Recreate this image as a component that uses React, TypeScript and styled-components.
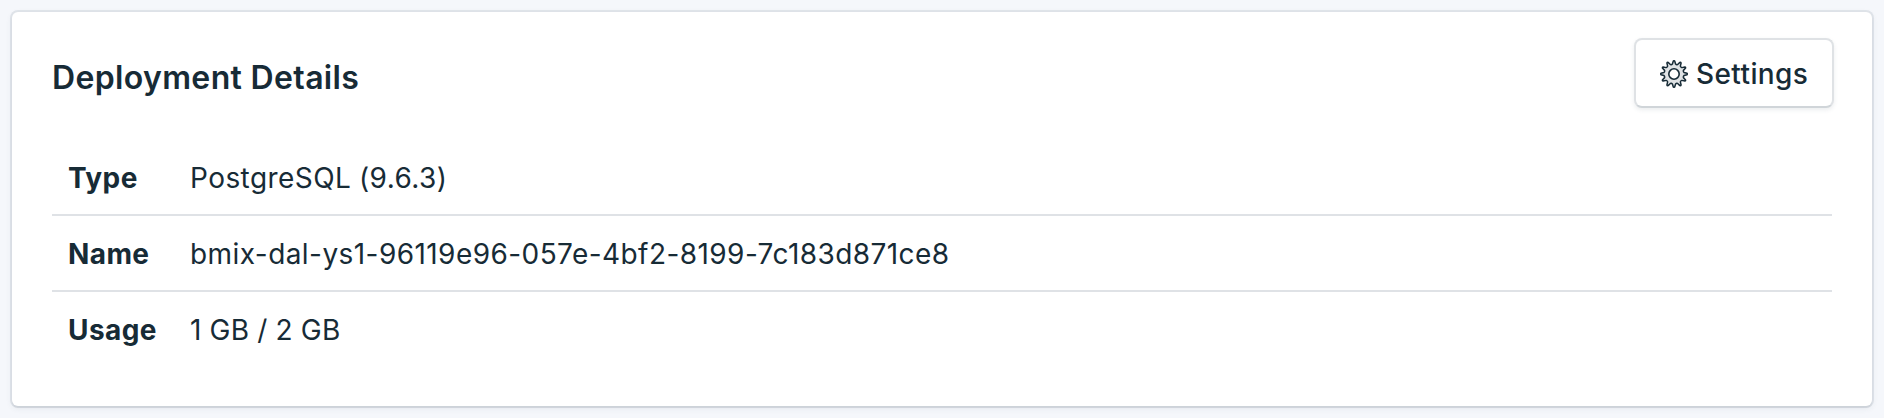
import React from "react";
import styled, { createGlobalStyle } from "styled-components";

const GlobalStyle = createGlobalStyle`
  *, *::before, *::after { box-sizing: border-box; }
  body {
    margin: 0;
    background: #f5f7fb;
    color: #172b36;
    font-family: Inter, "Liberation Sans", sans-serif;
    font-size: 28px;
  }
`;

const Page = styled.main`
  height: 418px;
  padding: 12px;
  overflow: hidden;
`;

const Card = styled.section`
  height: 394px;
  padding: 26px 38px 0 40px;
  background: #fff;
  border-radius: 6px;
  box-shadow:
    0 0 0 2px rgba(63, 83, 96, 0.1),
    0 2px 1px rgba(63, 83, 96, 0.06),
    0 2px 6px rgba(63, 83, 96, 0.1);
`;

const Header = styled.header`
  display: flex;
  justify-content: space-between;
  align-items: flex-start;
  height: 102px;
`;

const Title = styled.h2`
  margin: 20px 0 0;
  font-size: 32px;
  font-weight: 600;
  line-height: 40px;
  letter-spacing: 0.35px;
`;

const SettingsButton = styled.button`
  display: flex;
  align-items: center;
  gap: 8px;
  height: 70px;
  width: 200px;
  padding: 1px 0 0 24px;
  border: 2px solid #dfe2e5;
  border-bottom-color: #d0d5d9;
  border-radius: 8px;
  background: #fff;
  box-shadow: 0 2px 4px rgba(63, 83, 96, 0.1);
  color: inherit;
  font: 500 28px/34px Inter, "Liberation Sans", sans-serif;
  letter-spacing: 0.4px;
`;

const Details = styled.dl`
  margin: 0 2px 0 0;
`;

const Row = styled.div`
  display: grid;
  grid-template-columns: 121px 1fr;
  align-items: center;
  height: 76px;
  padding: 2px 0 0 16px;
  border-bottom: 2px solid #dfe2e6;

  &:last-child { border-bottom: 0; height: 74px; }
`;

const Label = styled.dt`
  font-weight: 700;
  line-height: 40px;
  letter-spacing: 0.4px;
`;

const Value = styled.dd`
  margin: 0 0 0 1px;
  line-height: 40px;
  letter-spacing: 0.43px;
  word-spacing: -0.6px;
`;

const TEETH = 12;

function gearPath(c: number, root: number, tip: number) {
  const pt = (r: number, a: number) =>
    `${(c + r * Math.sin(a)).toFixed(2)} ${(c - r * Math.cos(a)).toFixed(2)}`;
  const step = (Math.PI * 2) / TEETH;
  let d = "";
  for (let i = 0; i < TEETH; i++) {
    const a = i * step;
    d += `${i ? "L" : "M"}${pt(root, a - step * 0.3)}L${pt(tip, a - step * 0.1)}`;
    d += `Q${pt(tip + 0.6, a)} ${pt(tip, a + step * 0.1)}L${pt(root, a + step * 0.3)}`;
    d += `Q${pt(root - 0.7, a + step * 0.5)} ${pt(root, a + step * 0.7)}`;
  }
  return d + "Z";
}

const GearIcon = () => (
  <svg width="28" height="28" viewBox="0 0 28 28" fill="none" stroke="#172b36" aria-hidden="true">
    <path d={gearPath(14, 10.1, 13)} fill="#e0e3e5" strokeWidth="1.5" strokeLinejoin="round" />
    <circle cx="14" cy="14" r="5.2" fill="#fff" strokeWidth="1.6" />
  </svg>
);

const details = [
  { label: "Type", value: "PostgreSQL (9.6.3)" },
  { label: "Name", value: "bmix-dal-ys1-96119e96-057e-4bf2-8199-7c183d871ce8" },
  { label: "Usage", value: "1 GB / 2 GB" },
];

export default function App() {
  return (
    <Page>
      <GlobalStyle />
      <Card>
        <Header>
          <Title>Deployment Details</Title>
          <SettingsButton type="button">
            <GearIcon />
            Settings
          </SettingsButton>
        </Header>
        <Details>
          {details.map(({ label, value }) => (
            <Row key={label}>
              <Label>{label}</Label>
              <Value>{value}</Value>
            </Row>
          ))}
        </Details>
      </Card>
    </Page>
  );
}
